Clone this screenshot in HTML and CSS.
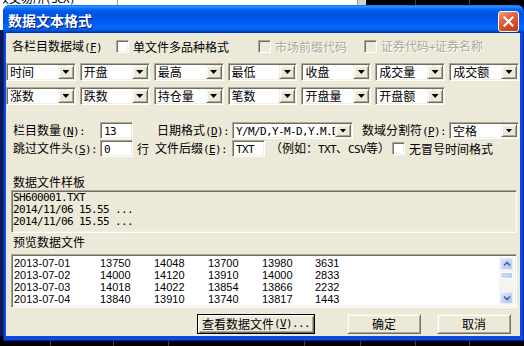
FILE: index.html
```html
<!DOCTYPE html>
<html lang="zh-CN">
<head>
<meta charset="utf-8">
<title>数据文本格式</title>
<link rel="stylesheet" href="styles.css">
</head>
<body>
<div class="desk-top">
  <div class="desk-white"><span class="desk-text">较交易所<span class="m">(SCX)</span></span></div>
  <div class="desk-sep"></div>
  <div class="desk-dark"></div>
</div>
<div class="desk-left"></div>
<div class="desk-bottom"></div>

<div class="dlg">
  <div class="title">
    <span class="title-text">数据文本格式</span>
    <span class="close"><svg width="11" height="11" viewBox="0 0 11 11"><path d="M1.5 1.5L9.5 9.5M9.5 1.5L1.5 9.5" stroke="#fff" stroke-width="2.2" stroke-linecap="square" fill="none"/></svg></span>
  </div>
  <div class="body">
    <div class="row row1">
      <span class="lbl w104">各栏目数据域<span class="m">(<u>F</u>)</span></span>
      <span class="grp w142"><span class="cb"></span><span class="cbl">单文件多品种格式</span></span>
      <span class="grp w106 dis"><span class="cb"></span><span class="cbl">市场前缀代码</span></span>
      <span class="grp dis"><span class="cb"></span><span class="cbl">证券代码<span class="m">+</span>证券名称</span></span>
    </div>

    <div class="combos ca">
      <div class="combo"><span class="ctext">时间</span><span class="cbtn"></span></div>
      <div class="combo"><span class="ctext">开盘</span><span class="cbtn"></span></div>
      <div class="combo"><span class="ctext">最高</span><span class="cbtn"></span></div>
      <div class="combo"><span class="ctext">最低</span><span class="cbtn"></span></div>
      <div class="combo"><span class="ctext">收盘</span><span class="cbtn"></span></div>
      <div class="combo"><span class="ctext">成交量</span><span class="cbtn"></span></div>
      <div class="combo"><span class="ctext">成交额</span><span class="cbtn"></span></div>
    </div>
    <div class="combos cbr">
      <div class="combo"><span class="ctext">涨数</span><span class="cbtn"></span></div>
      <div class="combo"><span class="ctext">跌数</span><span class="cbtn"></span></div>
      <div class="combo"><span class="ctext">持仓量</span><span class="cbtn"></span></div>
      <div class="combo"><span class="ctext">笔数</span><span class="cbtn"></span></div>
      <div class="combo"><span class="ctext">开盘量</span><span class="cbtn"></span></div>
      <div class="combo"><span class="ctext">开盘额</span><span class="cbtn"></span></div>
    </div>

    <div class="row row3">
      <span class="lbl w87">栏目数量<span class="m">(<u>N</u>):</span></span>
      <span class="edit"><span class="m">13</span></span>
      <span class="lbl ml24 w75">日期格式<span class="m">(<u>D</u>):</span></span>
      <div class="combo c17 w121"><span class="ctext clip"><span class="m">Y/M/D,Y-M-D,Y.M.D</span></span><span class="cbtn"></span></div>
      <span class="lbl ml9 w87">数域分割符<span class="m">(<u>P</u>):</span></span>
      <div class="combo c17 w70"><span class="ctext">空格</span><span class="cbtn"></span></div>
    </div>
    <div class="row row4">
      <span class="lbl w87">跳过文件头<span class="m">(<u>S</u>):</span></span>
      <span class="edit"><span class="m">0</span></span>
      <span class="lbl ml4 w12">行</span>
      <span class="lbl ml6 w77">文件后缀<span class="m">(<u>E</u>):</span></span>
      <span class="edit"><span class="m">TXT</span></span>
      <span class="lbl ml5 w120">（例如：<span class="m">TXT</span>、<span class="m">CSV</span>等）</span>
      <span class="grp ml2"><span class="cb"></span><span class="cbl">无冒号时间格式</span></span>
    </div>

    <div class="sec-lbl l1">数据文件样板</div>
    <div class="sample"><div class="m sline">SH600001.TXT</div><div class="m sline">2014/11/06 15.55 ...</div><div class="m sline">2014/11/06 15.55 ...</div></div>

    <div class="sec-lbl l2">预览数据文件</div>
    <div class="preview">
      <div class="plist">
        <div class="prow"><span>2013-07-01</span><span>13750</span><span>14048</span><span>13700</span><span>13980</span><span>3631</span></div>
        <div class="prow"><span>2013-07-02</span><span>14000</span><span>14120</span><span>13910</span><span>14000</span><span>2833</span></div>
        <div class="prow"><span>2013-07-03</span><span>14018</span><span>14022</span><span>13854</span><span>13866</span><span>2232</span></div>
        <div class="prow"><span>2013-07-04</span><span>13840</span><span>13910</span><span>13740</span><span>13817</span><span>1443</span></div>
      </div>
      <div class="sb">
        <span class="sbb"><svg width="8" height="6" viewBox="0 0 8 6"><path d="M1 4.5L4 1.5L7 4.5" stroke="#4D6185" stroke-width="1.6" fill="none"/></svg></span>
        <span class="thumb"></span>
        <span class="sb-gap"></span>
        <span class="sbb"><svg width="8" height="6" viewBox="0 0 8 6"><path d="M1 1.5L4 4.5L7 1.5" stroke="#4D6185" stroke-width="1.6" fill="none"/></svg></span>
      </div>
    </div>

    <div class="btns">
      <span class="btn def b1">查看数据文件<span class="m">(<u>V</u>)...</span></span>
      <span class="btn b2">确定</span>
      <span class="btn b3">取消</span>
    </div>
  </div>
</div>
</body>
</html>
```
FILE: styles.css
```css
* { box-sizing: border-box; }
html, body { margin: 0; padding: 0; }
body {
  width: 524px; height: 346px; overflow: hidden; position: relative;
  background: #000;
  font-family: "Noto Sans CJK SC", sans-serif; font-size: 12px; color: #000;
}
.m { font-family: "DejaVu Sans Mono", monospace; font-size: 11px; letter-spacing: -0.62px; }
u { text-decoration: underline; text-underline-offset: 1px; }

/* desktop behind the dialog */
.desk-top { position: absolute; left: 0; top: 0; width: 524px; height: 14px; display: flex; }
.desk-white {
  width: 358px; position: relative; overflow: hidden;
  background: linear-gradient(to right, #fff 117px, #9a9a9a 117px, #9a9a9a 118px, #fff 118px, #fff 357px, #9a9a9a 357px);
}
.desk-text { position: absolute; left: -3px; top: -9px; line-height: 14px; white-space: nowrap; }
.desk-sep { width: 8px; background: #D4D0C8; }
.desk-dark {
  flex: 1;
  background: linear-gradient(to right, #000 49px, #404040 49px, #404040 50px, #000 50px, #000 103px, #404040 103px, #404040 104px, #000 104px);
}
.desk-left { position: absolute; left: 0; top: 0; width: 3px; height: 346px; background: linear-gradient(#fff 0, #fff 30px, #0B1A4A 30px); }
.desk-bottom {
  position: absolute; left: 0; top: 336px; width: 524px; height: 10px;
  background: linear-gradient(to right, #000 50px, #404040 50px, #404040 51px, #000 51px, #000 113px, #404040 113px, #404040 114px, #000 114px, #000 168px, #404040 168px, #404040 169px, #000 169px, #000 304px, #404040 304px, #404040 305px, #000 305px, #000 360px, #404040 360px, #404040 361px, #000 361px, #000 415px, #404040 415px, #404040 416px, #000 416px, #000 469px, #404040 469px, #404040 470px, #000 470px);
}

/* dialog window */
.dlg {
  position: absolute; left: 3px; top: 5px; width: 521px; height: 336px;
  display: flex; flex-direction: column;
  background: #0B4BDA;
  border-radius: 7px 7px 0 0;
  padding-bottom: 5px;
  box-shadow: inset 1px 0 0 #0021B0, inset -1px 0 0 #0021B0, inset 0 -1px 0 #0021B0;
}
.title {
  height: 28px; flex: none; display: flex; align-items: flex-start;
  padding: 3px 5px 0 5px;
  border-radius: 7px 7px 0 0;
  background: linear-gradient(to bottom, #0058EE 0%, #3593FF 4%, #288EFF 7%, #127DFF 10%, #036FFC 14%, #0262EE 18%, #0057E5 24%, #0054E3 30%, #0055EB 56%, #005BF5 66%, #026AFE 76%, #0062EF 86%, #0052D6 92%, #0040AB 96%, #003092 100%);
}
.title-text {
  line-height: 25px; font-size: 14px; font-weight: 700; color: #fff;
  text-shadow: 1px 1px 0 #0A1883;
}
.close {
  margin-left: auto; margin-top: 3px; width: 21px; height: 21px;
  border: 1px solid #fff; border-radius: 3px;
  background: linear-gradient(150deg, #F0A088 0%, #E46643 35%, #D2451F 75%, #C13812 100%);
  display: flex; align-items: center; justify-content: center;
}
.body {
  flex: 1; margin: 0 4px 0 3px; background: #ECE9D8;
  display: flex; flex-direction: column;
}

/* 3D edges */
.cb, .combo, .edit, .sample, .preview {
  border: 1px solid; border-color: #ACA899 #FFFFFF #FFFFFF #ACA899;
  box-shadow: inset 1px 1px 0 #716F64, inset -1px -1px 0 #F1EFE2;
}
.cbtn, .btn {
  border: 1px solid; border-color: #F1EFE2 #716F64 #716F64 #F1EFE2;
  box-shadow: inset 1px 1px 0 #FFFFFF, inset -1px -1px 0 #ACA899;
  background: #ECE9D8;
}

/* rows */
.row { display: flex; align-items: center; flex: none; }
.lbl { white-space: nowrap; line-height: 14px; flex: none; }
.grp { display: flex; align-items: center; white-space: nowrap; }
.cb { width: 13px; height: 13px; background: #fff; flex: none; }
.cbl { margin-left: 4px; line-height: 13px; }
.dis { color: #ACA899; text-shadow: 1px 1px 0 #fff; }
.dis .cb { background: #ECE9D8; }

.row1 { margin-top: 7px; height: 13px; padding-left: 6px; }
.w104 { width: 104px; } .w142 { width: 142px; } .w106 { width: 106px; }
.w87 { width: 87px; } .w75 { width: 75px; } .w77 { width: 77px; } .w12 { width: 12px; }
.w120 { width: 120px; } .w121 { width: 121px; } .w70 { width: 70px; }
.ml2 { margin-left: 2px; } .ml4 { margin-left: 4px; } .ml5 { margin-left: 5px; }
.ml6 { margin-left: 6px; } .ml9 { margin-left: 9px; } .ml24 { margin-left: 24px; }

.combos { display: grid; grid-template-columns: repeat(7, 1fr); column-gap: 4px; height: 18px; padding-right: 1px; flex: none; }
.ca { margin-top: 10px; }
.cbr { margin-top: 6px; }
.combo { display: flex; align-items: center; height: 18px; background: #fff; padding: 1px; flex: none; }
.combo.c17 { height: 17px; }
.ctext { flex: 1; white-space: nowrap; padding-left: 2px; line-height: 14px; min-width: 0; }
.ctext.clip { overflow: hidden; line-height: 13px; }
.cbtn { width: 16px; height: 100%; flex: none; display: flex; align-items: center; justify-content: center; }
.cbtn::after { content: ""; width: 7px; height: 4px; background: #000; clip-path: polygon(0 0, 100% 0, 50% 100%); }

.row3 { margin-top: 17px; height: 17px; padding-left: 7px; }
.row4 { margin-top: 1px; height: 17px; padding-left: 7px; }
.edit { width: 33px; height: 17px; background: #fff; padding-left: 3px; line-height: 14px; flex: none; white-space: nowrap; }

.sec-lbl { padding-left: 7px; height: 14px; line-height: 14px; flex: none; }
.l1 { margin-top: 18px; }
.l2 { margin-top: 2px; }
.sample { margin: 1px 0 0 5px; width: 506px; height: 43px; background: #ECE9D8; padding: 1px 2px 0 1px; flex: none; }
.sline { line-height: 12px; white-space: pre; }

.preview { margin: 5px 0 0 5px; width: 506px; height: 54px; background: #fff; padding: 2px; display: flex; flex: none; }
.plist { flex: 1; font-family: "Liberation Sans", Arial, sans-serif; font-size: 11px; line-height: 12px; }
.prow { display: grid; grid-template-columns: 86px 54px 54px 54px 53px 40px; white-space: nowrap; }
.sb { width: 15px; flex: none; display: flex; flex-direction: column; background: #F5F4EF; padding: 1px; }
.sbb {
  width: 13px; height: 12px; flex: none; border-radius: 2px;
  border: 1px solid #E8EEFC;
  background: linear-gradient(135deg, #DCE6FD 0%, #C3D4FA 50%, #B2C6F4 100%);
  display: flex; align-items: center; justify-content: center;
}
.thumb { width: 13px; height: 7px; margin-top: 2px; flex: none; border-radius: 2px; border: 1px solid #fff; background: linear-gradient(90deg, #CBD9FC, #B8CAF5); }
.sb-gap { flex: 1; }

.btns { display: flex; margin-top: 6px; height: 20px; flex: none; }
.btn { height: 20px; display: flex; align-items: center; justify-content: center; white-space: nowrap; line-height: 14px; }
.btn.def {
  border: 1px solid #000;
  box-shadow: inset 1px 1px 0 #FFFFFF, inset -1px -1px 0 #716F64, inset 2px 2px 0 #F1EFE2, inset -2px -2px 0 #ACA899;
}
.b1 { margin-left: 191px; width: 118px; }
.b2 { margin-left: 32px; width: 74px; }
.b3 { margin-left: 16px; width: 74px; }
```
